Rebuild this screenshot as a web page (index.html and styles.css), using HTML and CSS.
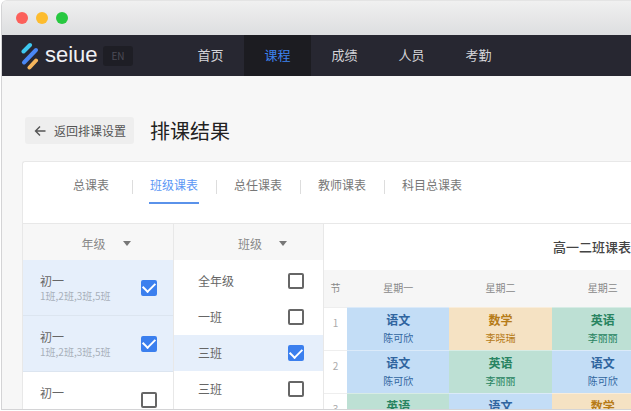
FILE: index.html
```html
<!DOCTYPE html>
<html lang="zh-CN">
<head>
    <meta charset="UTF-8">
    <meta name="viewport" content="width=device-width, initial-scale=1.0">
    <title>排课结果</title>
    <link rel="stylesheet" href="styles.css">
</head>
<body>

    <div class="window">
        <div class="titlebar">
            <span class="dot red"></span>
            <span class="dot yellow"></span>
            <span class="dot green"></span>
        </div>

        <header class="navbar">
            <a class="brand" href="#">
                <svg width="18" height="28" viewBox="0 0 18 28" fill="none" stroke-width="4" stroke-linecap="round">
                    <path d="M2.5 9.5L9 3" stroke="#3ec8f0"/>
                    <path d="M3 20.5L15 8" stroke="#4a87f5"/>
                    <path d="M8.5 25.5L15 18.5" stroke="#f5b55c"/>
                </svg>
                <span class="brand-name">seiue</span>
            </a>
            <button type="button" class="lang">EN</button>
            <nav class="menu">
                <a href="#">首页</a>
                <a href="#" class="active">课程</a>
                <a href="#">成绩</a>
                <a href="#">人员</a>
                <a href="#">考勤</a>
            </nav>
        </header>

        <main class="content">
            <div class="page-head">
                <button type="button" class="back">
                    <svg width="12" height="12" viewBox="0 0 12 12" fill="none" stroke="#555" stroke-width="1.4">
                        <path d="M11.5 6H1.5M6 1.5L1.5 6L6 10.5"/>
                    </svg>
                    返回排课设置
                </button>
                <h1>排课结果</h1>
            </div>

            <section class="card">
                <ul class="tabs">
                    <li><a href="#">总课表</a></li>
                    <li><a href="#" class="active">班级课表</a></li>
                    <li><a href="#">总任课表</a></li>
                    <li><a href="#">教师课表</a></li>
                    <li><a href="#">科目总课表</a></li>
                </ul>

                <div class="panels">
                    <div class="column">
                        <button type="button" class="column-head">年级 <span class="caret"></span></button>
                        <label class="grade checked">
                            <span class="grade-text">初一<small>1班,2班,3班,5班</small></span>
                            <input type="checkbox" checked>
                        </label>
                        <label class="grade checked">
                            <span class="grade-text">初一<small>1班,2班,3班,5班</small></span>
                            <input type="checkbox" checked>
                        </label>
                        <label class="grade">
                            <span class="grade-text">初一<small></small></span>
                            <input type="checkbox">
                        </label>
                    </div>

                    <div class="column">
                        <button type="button" class="column-head class-head">班级 <span class="caret"></span></button>
                        <div class="class-list">
                            <label class="class-row">全年级 <input type="checkbox"></label>
                            <label class="class-row">一班 <input type="checkbox"></label>
                            <label class="class-row checked">三班 <input type="checkbox" checked></label>
                            <label class="class-row">三班 <input type="checkbox"></label>
                        </div>
                    </div>

                    <div class="schedule">
                        <h2>高一二班课表</h2>
                        <table>
                            <thead>
                                <tr>
                                    <th class="period">节</th>
                                    <th>星期一</th>
                                    <th>星期二</th>
                                    <th>星期三</th>
                                </tr>
                            </thead>
                            <tbody>
                                <tr>
                                    <td class="period">1</td>
                                    <td class="blue"><b>语文</b>陈可欣</td>
                                    <td class="orange"><b>数学</b>李晓瑞</td>
                                    <td class="teal"><b>英语</b>李丽丽</td>
                                </tr>
                                <tr>
                                    <td class="period">2</td>
                                    <td class="blue"><b>语文</b>陈可欣</td>
                                    <td class="teal"><b>英语</b>李丽丽</td>
                                    <td class="blue"><b>语文</b>陈可欣</td>
                                </tr>
                                <tr>
                                    <td class="period">3</td>
                                    <td class="teal"><b>英语</b></td>
                                    <td class="blue"><b>语文</b></td>
                                    <td class="orange"><b>数学</b></td>
                                </tr>
                            </tbody>
                        </table>
                    </div>
                </div>
            </section>
        </main>
    </div>

</body>
</html>
```
FILE: styles.css
```css
* {
    box-sizing: border-box;
}

body {
    margin: 0;
    padding-left: 1px;
    background: #fff;
    font-family: "Noto Sans CJK SC", sans-serif;
    font-size: 12px;
    line-height: 16px;
    color: #666;
    overflow: hidden;
}

a {
    color: inherit;
    text-decoration: none;
}

button {
    border: none;
    padding: 0;
    font: inherit;
    color: inherit;
    cursor: pointer;
}

.window {
    display: flex;
    flex-direction: column;
    height: calc(100vh - 1px);
    border: 1px solid #d4d4d6;
    border-top-color: #e4e4e4;
    border-right: none;
    border-top-left-radius: 6px;
    background: #f7f7f7;
    overflow: hidden;
}

.titlebar {
    display: flex;
    flex: none;
    align-items: center;
    gap: 8px;
    height: 34px;
    padding-left: 14px;
    background: linear-gradient(#f0f0f0, #dddee0);
}

.dot {
    width: 12px;
    height: 12px;
    border-radius: 50%;
}

.red {
    background: #fc605b;
}

.yellow {
    background: #fdbc2e;
}

.green {
    background: #27c840;
}

.navbar {
    display: flex;
    flex: none;
    align-items: center;
    height: 41px;
    padding-left: 19px;
    background: #272731;
    color: #d4d4d8;
}

.brand {
    display: flex;
    align-items: center;
    gap: 6px;
    width: 82px;
}

.brand-name {
    padding-bottom: 2px;
    font-family: "Liberation Sans", sans-serif;
    font-size: 22px;
    line-height: 24px;
    color: #f0f0f4;
}

.lang {
    width: 30px;
    height: 20px;
    border-radius: 3px;
    background: #1e1e25;
    color: #4c4c55;
    font-size: 10px;
}

.menu {
    display: flex;
    align-self: stretch;
    padding-left: 44px;
    font-size: 13px;
}

.menu a {
    width: 67px;
    line-height: 39px;
    text-align: center;
}

.menu .active {
    background: #1c1c21;
    color: #3c82ee;
}

.content {
    padding: 41px 0 0 20px;
}

.page-head {
    display: flex;
    align-items: center;
    gap: 16px;
    margin-left: 3px;
}

.back {
    display: flex;
    align-items: center;
    gap: 8px;
    height: 27px;
    padding: 0 8px 0 9px;
    border-radius: 3px;
    background: #eee;
    color: #555;
}

h1 {
    margin: 0;
    font-size: 20px;
    font-weight: 400;
    line-height: 26px;
    color: #222;
}

.card {
    margin-top: 17px;
    border: 1px solid #e8e8e8;
    border-right: none;
    border-top-left-radius: 3px;
    background: #fff;
}

.tabs {
    display: flex;
    margin: 0;
    padding: 14px 0 19px 33px;
    border-bottom: 1px solid #e8e8e8;
    list-style: none;
    white-space: nowrap;
}

.tabs li {
    display: flex;
}

.tabs li + li::before {
    content: "";
    width: 1px;
    height: 14px;
    margin-top: 4px;
    background: #ddd;
}

.tabs a {
    height: 28px;
    margin: 0 17px 0 16px;
    padding: 1px;
    color: #777;
}

.tabs li:first-child a {
    margin-right: 22px;
}

.tabs .active {
    border-bottom: 2px solid #5a92ea;
    color: #5b97f5;
}

.panels {
    display: flex;
}

.column {
    flex: none;
    width: 151px;
    border-right: 1px solid #e8e8e8;
}

.column + .column {
    width: 150px;
}

.column-head {
    display: flex;
    align-items: center;
    justify-content: center;
    gap: 17px;
    width: 100%;
    height: 36px;
    padding-top: 3px;
    padding-left: 16px;
    background: #f7f7f7;
    color: #888;
}

.class-head {
    padding-left: 28px;
}

.caret {
    border: 4px solid transparent;
    border-top: 5px solid #777;
    border-bottom: none;
}

input[type="checkbox"] {
    appearance: none;
    display: grid;
    place-items: center;
    width: 16px;
    height: 16px;
    margin: 0;
    border: 2px solid #666;
    border-radius: 2px;
    background: #fff;
}

input[type="checkbox"]:checked {
    border-color: #3b7fee;
    background: #3b7fee;
}

/* tick */
input[type="checkbox"]:checked::before {
    content: "";
    width: 10px;
    height: 6px;
    margin-bottom: 3px;
    border: solid #fff;
    border-width: 0 0 2px 2px;
    transform: rotate(-45deg);
}

.grade,
.class-row {
    display: flex;
    align-items: center;
    justify-content: space-between;
}

.grade {
    height: 56px;
    padding: 0 16px 0 17px;
    border-bottom: 1px solid #dce5f0;
}

.grade-text small {
    display: block;
    height: 14px;
    font-size: 10px;
    line-height: 14px;
    color: #a8b0ba;
}

.checked {
    background: #e6effb;
}

.class-list {
    padding-top: 3px;
}

.class-row {
    height: 36px;
    padding: 0 19px 0 24px;
}

.schedule {
    flex: 1;
    min-width: 0;
}

h2 {
    margin: 0;
    font-size: 13px;
    font-weight: 500;
    line-height: 46px;
    text-align: right;
    color: #444;
}

table {
    width: 330px;
    min-width: 100%;
    border-collapse: collapse;
    table-layout: fixed;
    font-size: 10px;
    line-height: 14px;
}

th,
td {
    padding: 0;
    text-align: center;
}

th {
    height: 37px;
    background: #f6f6f6;
    font-weight: 400;
    color: #888;
}

td {
    height: 43px;
    padding-top: 4px;
    border-top: 1px solid rgba(255, 255, 255, 0.4);
    vertical-align: top;
}

td b {
    display: block;
    margin-bottom: 3px;
    font-size: 12px;
    font-weight: 700;
    line-height: 16px;
}

td.period {
    padding-top: 8px;
    border-top: 1px solid #eee;
    color: #aaa;
}

.period {
    width: 23px;
}

.blue {
    background: #c3ddf6;
    color: #30659f;
}

.orange {
    background: #f5e2c3;
    color: #b67b17;
}

.teal {
    background: #bde0d4;
    color: #288461;
}
```
